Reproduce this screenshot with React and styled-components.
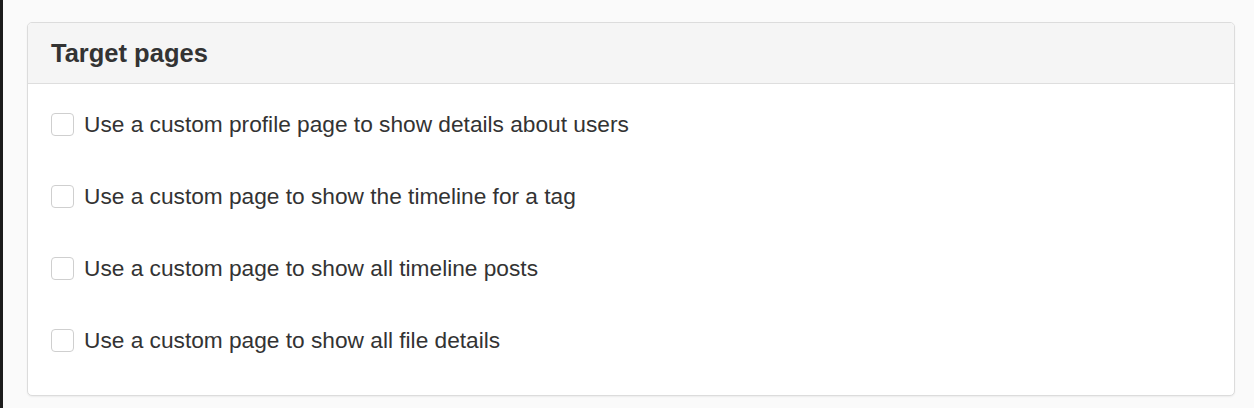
import React from "react"
import styled, { createGlobalStyle } from "styled-components"

const GlobalStyle = createGlobalStyle`
  html, body {
    margin: 0;
    padding: 0;
    background: #fafafa;
    font-family: "Liberation Sans", Arial, Helvetica, sans-serif;
  }
`

const Page = styled.div`
  display: flex;
  min-height: 408px;
  background: #fafafa;
`

const EdgeStrip = styled.div`
  flex: 0 0 3px;
  background: #1c1c1c;
`

const Main = styled.main`
  flex: 1;
  padding: 22px 19px 0 24px;
`

const Card = styled.section`
  background: #fff;
  border: 1px solid #dcdcdc;
  border-radius: 5px;
  box-shadow: 0 1px 2px rgba(0, 0, 0, 0.06);
  overflow: hidden;
`

const CardHeader = styled.header`
  display: flex;
  align-items: center;
  height: 60px;
  padding: 0 23px;
  background: #f5f5f5;
  border-bottom: 1px solid #dedede;
`

const Title = styled.h2`
  margin: 0;
  font-size: 25.5px;
  font-weight: 700;
  color: #333;
  line-height: 1.1;
`

const CardBody = styled.div`
  display: flex;
  flex-direction: column;
  gap: 40px;
  padding: 24px 23px 39px;
`

const OptionRow = styled.label`
  display: flex;
  align-items: center;
  gap: 10px;
  height: 32px;
  cursor: pointer;
`

const Box = styled.span`
  flex: 0 0 auto;
  width: 21px;
  height: 21px;
  border: 1px solid #cfcfcf;
  border-radius: 4px;
  background: ${props => (props.checked ? "#337ab7" : "#fff")};
`

const OptionText = styled.span`
  font-size: 22.7px;
  color: #333;
  line-height: 1;
`

const options = [
  "Use a custom profile page to show details about users",
  "Use a custom page to show the timeline for a tag",
  "Use a custom page to show all timeline posts",
  "Use a custom page to show all file details",
]

export default function App() {
  return (
    <>
      <GlobalStyle />
      <Page>
        <EdgeStrip />
        <Main>
          <Card>
            <CardHeader>
              <Title>Target pages</Title>
            </CardHeader>
            <CardBody>
              {options.map(text => (
                <OptionRow key={text}>
                  <Box />
                  <OptionText>{text}</OptionText>
                </OptionRow>
              ))}
            </CardBody>
          </Card>
        </Main>
      </Page>
    </>
  )
}
